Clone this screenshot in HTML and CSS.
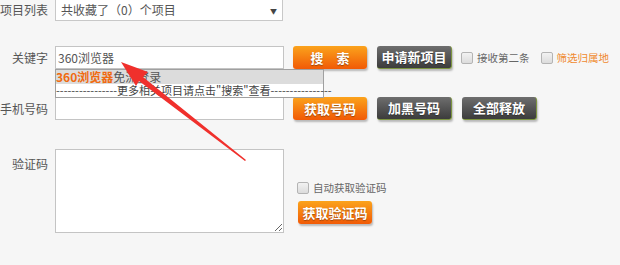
FILE: index.html
```html
<!DOCTYPE html>
<html lang="zh-CN">
<head>
  <meta charset="UTF-8" />
  <title>项目</title>
  <link rel="stylesheet" href="styles.css">
</head>
<body>
  <div class="form">
    <div class="row row-project">
      <label class="label">项目列表</label>
      <div class="select">共收藏了（0）个项目<span class="caret">▼</span></div>
    </div>

    <div class="row row-keyword">
      <label class="label">关键字</label>
      <div class="field">
        <input class="input" type="text" value="360浏览器">
        <div class="suggest">
          <div class="suggest-item active"><b>360浏览器</b>免流登录</div>
          <div class="suggest-more">----------------更多相关项目请点击"搜索"查看----------------</div>
        </div>
      </div>
      <button class="btn btn-orange">搜　索</button>
      <button class="btn btn-dark">申请新项目</button>
      <span class="check"><i class="box"></i>接收第二条</span>
      <span class="check orange"><i class="box"></i>筛选归属地</span>
    </div>

    <div class="row row-phone">
      <label class="label">手机号码</label>
      <input class="input" type="text">
      <button class="btn btn-orange">获取号码</button>
      <button class="btn btn-dark">加黑号码</button>
      <button class="btn btn-dark">全部释放</button>
    </div>

    <div class="row row-code">
      <label class="label">验证码</label>
      <textarea class="textarea"></textarea>
      <div class="side">
        <span class="check"><i class="box"></i>自动获取验证码</span>
        <button class="btn btn-orange">获取验证码</button>
      </div>
    </div>
  </div>

  <svg class="arrow" width="620" height="265" viewBox="0 0 620 265">
    <polygon fill="#f0302c" points="121,62 148,72 143,77 246,160 245,161 139,81 136,86"/>
  </svg>
</body>
</html>
```

FILE: styles.css
```css
body {
  margin: 0;
  background: #f6f6f6;
  font-family: "Noto Sans CJK SC", "Noto Sans", sans-serif;
  font-size: 12px;
  color: #555;
  overflow: hidden;
}
.form {
  margin-top: -3px;
}
.row {
  display: flex;
  align-items: center;
  white-space: nowrap;
}
.row > * {
  flex-shrink: 0;
}
.label {
  width: 48px;
  margin-right: 7px;
  text-align: right;
  color: #555;
}
.row-project {
  height: 24px;
}
.row-keyword {
  margin-top: 25px;
  height: 23px;
}
.row-phone {
  margin-top: 28px;
  height: 23px;
}
.row-code {
  margin-top: 29px;
  align-items: flex-start;
}
.row-code .label {
  margin-top: 6px;
}
.select {
  position: relative;
  box-sizing: border-box;
  width: 228px;
  height: 24px;
  line-height: 22px;
  border: 1px solid #c8c8c8;
  background: #fff;
  padding-left: 5px;
  padding-top: 1px;
  color: #555;
}
.caret {
  position: absolute;
  right: 5px;
  top: 2px;
  font-size: 7px;
  color: #444;
}
.field {
  position: relative;
}
.input {
  box-sizing: border-box;
  width: 229px;
  height: 23px;
  border: 1px solid #c4c4c4;
  background: #fff;
  padding: 0 2px;
  margin: 0;
  font-family: inherit;
  font-size: 12px;
  color: #555;
  outline: none;
}
.suggest {
  position: absolute;
  left: 0;
  top: 23px;
  box-sizing: border-box;
  width: 269px;
  border: 1px solid #a0a0a0;
  background: #fff;
  z-index: 2;
}
.suggest-item {
  line-height: 14px;
  background: #dcdcdc;
  color: #555;
}
.suggest-item b {
  color: #f06a10;
}
.suggest-more {
  line-height: 13px;
  text-align: center;
  font-size: 11px;
  color: #444;
}
.btn {
  box-sizing: border-box;
  width: 74px;
  height: 23px;
  margin-left: 9px;
  padding: 0;
  border: none;
  border-radius: 3px;
  font-family: inherit;
  font-size: 13px;
  font-weight: bold;
  line-height: 22px;
  color: #fff;
  text-shadow: 0 1px 1px rgba(0, 0, 0, 0.35);
  box-shadow: 1px 2px 2px rgba(0, 0, 0, 0.25);
  cursor: pointer;
}
.btn + .btn {
  margin-left: 10px;
}
.btn-orange {
  background: linear-gradient(#fba31c, #f15a06);
}
.btn-dark {
  width: 75px;
  background: linear-gradient(#6e6e6e, #3c3c3c);
  border-right: 1px solid #7c9440;
  border-bottom: 1px solid #7c9440;
}
.check {
  display: flex;
  align-items: center;
  margin-left: 9px;
  font-size: 10.5px;
  color: #666;
}
.check + .check {
  margin-left: 11px;
}
.check.orange {
  color: #f08a30;
}
.box {
  display: inline-block;
  width: 10px;
  height: 10px;
  margin-right: 4px;
  border: 1px solid #b4b4b4;
  border-radius: 2px;
  background: linear-gradient(#f2f2f2, #dcdcdc);
}
.textarea {
  box-sizing: border-box;
  width: 229px;
  height: 84px;
  border: 1px solid #c4c4c4;
  background: #fff;
  margin: 0;
  outline: none;
}
.side {
  display: flex;
  flex-direction: column;
  align-items: flex-start;
  margin-left: 13px;
  margin-top: 31px;
}
.side .check {
  margin-left: 0;
}
.side .btn {
  margin-left: 1px;
  margin-top: 6px;
}
.arrow {
  position: absolute;
  left: 0;
  top: 0;
  pointer-events: none;
  z-index: 5;
}
```
